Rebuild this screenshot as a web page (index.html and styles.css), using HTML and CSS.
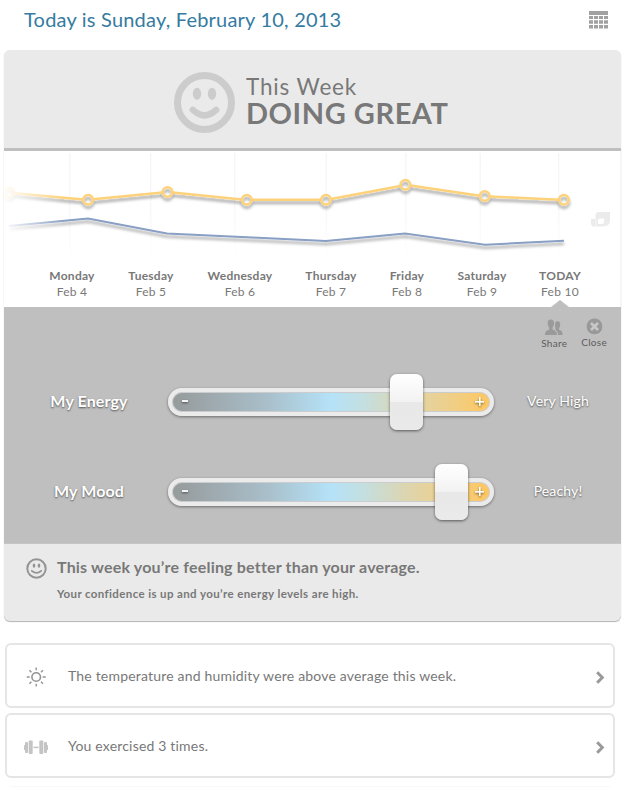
FILE: index.html
```html
<!DOCTYPE html>
<html lang="en">
<head>
<meta charset="utf-8">
<title>This Week</title>
<link rel="stylesheet" href="styles.css">
</head>
<body>
<main class="page">
  <header class="topbar">
    <h1 class="today">Today is Sunday, February 10, 2013</h1>
    <svg class="calendar" width="19" height="18" viewBox="0 0 19 18" fill="#a1a1a1"><path d="M0 0h19v4H0z"/><path d="M0 5h4v3H0zM5 5h4v3H5zM10 5h4v3h-4zM15 5h4v3h-4zM0 9.3h4v3.5H0zM5 9.3h4v3.5H5zM10 9.3h4v3.5h-4zM15 9.3h4v3.5h-4zM0 14h4v3.5H0zM5 14h4v3.5H5zM10 14h4v3.5h-4zM15 14h4v3.5h-4z"/></svg>
  </header>

  <section class="card">
    <div class="hero">
      <svg class="hero-face" width="62" height="62" viewBox="0 0 62 62"><circle cx="31.500" cy="30.500" r="27" fill="none" stroke="#cccccc" stroke-width="7"/><ellipse cx="24" cy="21.800" rx="4.200" ry="6.100" fill="#ccc"/><ellipse cx="39" cy="21.800" rx="4.200" ry="6.100" fill="#ccc"/><path d="M19.800 37.800Q31.300 48.800 43.200 37.800" fill="none" stroke="#ccc" stroke-width="6.400" stroke-linecap="round"/></svg>
      <div class="hero-text">
        <p class="hero-label">This Week</p>
        <p class="hero-value">DOING GREAT</p>
      </div>
    </div>

    <div class="chart">
      <svg class="plot" width="621" height="114" viewBox="0 151 621 114">
        <defs>
          <linearGradient id="fade" gradientUnits="userSpaceOnUse" x1="0" y1="0" x2="64" y2="0"><stop offset="0" stop-color="#000"/><stop offset=".15" stop-color="#222"/><stop offset="1" stop-color="#fff"/></linearGradient>
          <linearGradient id="grid" x1="0" y1="0" x2="0" y2="1"><stop offset="0" stop-color="#f6f6f6"/><stop offset=".6" stop-color="#f9f9f9"/><stop offset="1" stop-color="#fff"/></linearGradient>
          <mask id="left" maskUnits="userSpaceOnUse" x="0" y="151" width="621" height="114"><rect x="0" y="151" width="621" height="114" fill="url(#fade)"/></mask>
          <filter id="drop" filterUnits="userSpaceOnUse" x="0" y="151" width="621" height="114"><feDropShadow dx="0" dy="3" stdDeviation="1.5" flood-color="#000" flood-opacity=".38"/></filter>
        </defs>
        <g fill="url(#grid)"><rect x="69" y="153" width="1.5" height="108"/><rect x="150" y="153" width="1.5" height="108"/><rect x="234" y="153" width="1.5" height="108"/><rect x="325.500" y="153" width="1.5" height="108"/><rect x="405" y="153" width="1.500" height="108"/><rect x="479.500" y="153" width="1.5" height="108"/><rect x="558" y="153" width="1.5" height="108"/></g>
        <g mask="url(#left)" fill="none">
          <polyline filter="url(#drop)" points="9,226 88,218.500 167,233.500 247,237.300 326,241 405,233.500 485,244.700 564,240.800" stroke="#8a9fc4" stroke-width="2"/>
          <g filter="url(#drop)" stroke="#fdd27a" stroke-width="2.500">
            <path d="M14.500 193.300L83.200 199.400M93 199.300L162.500 192.500M172.500 192.500L242 199.500M252 199.800H321M331 199L400.500 185.900M410.500 185.500L480 195.800M490 196.400L559 199.700"/>
            <circle cx="9" cy="192.500" r="4.800"/><circle cx="88.200" cy="199.800" r="4.800"/><circle cx="167.500" cy="192" r="4.800"/><circle cx="246.800" cy="199.800" r="4.800"/><circle cx="326" cy="199.800" r="4.800"/><circle cx="405.400" cy="184.800" r="4.800"/><circle cx="484.700" cy="196" r="4.800"/><circle cx="563.900" cy="199.800" r="4.800"/>
          </g>
        </g>
        <path fill="#ebebeb" fill-rule="evenodd" d="M599 212H610V220Q610 226.500 603 226.500H594Q591 226.500 591 223V219H595.500V216Q595.500 212 599 212ZM600 218.500Q598 218.500 598 220.500V224H602Q604 224 604 222V218.500Z"/><path d="M595.900 219v7" stroke="#fff" stroke-width=".6"/>
      </svg>
      <div class="days">
        <div class="day"><b>Monday</b><span>Feb 4</span></div>
        <div class="day"><b>Tuesday</b><span>Feb 5</span></div>
        <div class="day"><b>Wednesday</b><span>Feb 6</span></div>
        <div class="day"><b>Thursday</b><span>Feb 7</span></div>
        <div class="day"><b>Friday</b><span>Feb 8</span></div>
        <div class="day"><b>Saturday</b><span>Feb 9</span></div>
        <div class="day current"><b>TODAY</b><span>Feb 10</span></div>
      </div>
    </div>

    <div class="panel">
      <div class="actions">
        <div class="action share">
          <svg width="18" height="17" viewBox="0 0 18 17" fill="#9a9a9a"><path d="M2.700 4C2.700 1.500 4 .5 5.800.5S9 1.500 9 4C9 6.200 8.300 7.500 7.500 8.500V10.500L10.500 12Q12 13 12 16H0Q0 13 1.200 12L4.200 10.500V8.500C3.400 7.500 2.700 6.200 2.700 4Z"/><path d="M10 5.500C10 3 11 2.200 12.700 2.200S15.200 3 15.200 5.500C15.200 7.500 14.600 8.400 14 9.300V10.700L16.300 11.800Q17.600 12.800 17.600 16H13.200Q13.200 12.500 10.500 11V9.300Q10 7.500 10 5.500Z"/></svg>
          <span>Share</span>
        </div>
        <div class="action close">
          <svg width="17" height="17" viewBox="0 0 17 17"><circle cx="8.500" cy="9" r="8" fill="#cecece"/><circle cx="8.500" cy="8.500" r="8" fill="#999"/><path d="M5 5l7 7M12 5l-7 7" stroke="#c8c8c8" stroke-width="2.600"/></svg>
          <span>Close</span>
        </div>
      </div>
      <div class="row">
        <span class="name name-energy">My Energy</span>
        <div class="slider energy"><i class="minus"></i><i class="plus"></i><i class="thumb"></i></div>
        <span class="value value-energy">Very High</span>
      </div>
      <div class="row">
        <span class="name name-mood">My Mood</span>
        <div class="slider mood"><i class="minus"></i><i class="plus"></i><i class="thumb"></i></div>
        <span class="value value-mood">Peachy!</span>
      </div>
    </div>

    <div class="summary">
      <svg width="21" height="21" viewBox="0 0 21 21" fill="none" stroke="#949494"><circle cx="10.500" cy="10.500" r="9.200" stroke-width="2"/><path d="M5.800 12.800Q10.500 17 15.200 12.800" stroke-width="1.800" stroke-linecap="round"/><g fill="#949494" stroke="none"><ellipse cx="8" cy="7.700" rx="1.300" ry="2.100"/><ellipse cx="13" cy="7.700" rx="1.300" ry="2.100"/></g></svg>
      <div>
        <h2 class="headline">This week you’re feeling better than your average.</h2>
        <p class="detail">Your confidence is up and you’re energy levels are high.</p>
      </div>
    </div>
  </section>

  <section class="insights">
    <div class="insight">
      <svg class="insight-icon" width="24" height="20" viewBox="0 0 24 20" fill="none" stroke="#949494" stroke-width="1.400"><circle cx="12.200" cy="10" r="4.300" stroke-width="1.600"/><path d="M12.200.5v2.800M12.200 16.700v2.800M2.700 10h3M18.700 10h3M5.400 3.300l2 2M17 14.700l2 2M19 3.300l-2 2M7.400 14.700l-2 2"/></svg>
      <p class="insight-text">The temperature and humidity were above average this week.</p>
      <svg class="chevron" width="9" height="13" viewBox="0 0 9 13" fill="none" stroke="#999" stroke-width="3"><path d="M1.200 1.200L6.300 6.500L1.200 11.800"/></svg>
    </div>
    <div class="insight">
      <svg class="insight-icon" width="24" height="20" viewBox="0 0 24 20" fill="#c4c4c4"><rect y="8" width="1.300" height="5" rx=".6"/><rect x="1" y="5" width="3" height="11" rx="1"/><rect x="4.700" y="3.500" width="4" height="13.500" rx="1"/><path d="M9.500 9.600h5v1.600h-5z"/><rect x="15.300" y="3.500" width="4" height="13.500" rx="1"/><rect x="20" y="5" width="3" height="11" rx="1"/><rect x="22.700" y="8" width="1.300" height="5" rx=".6"/></svg>
      <p class="insight-text">You exercised 3 times.</p>
      <svg class="chevron" width="9" height="13" viewBox="0 0 9 13" fill="none" stroke="#999" stroke-width="3"><path d="M1.200 1.200L6.300 6.500L1.200 11.800"/></svg>
    </div>
  </section>
  <div class="rule"></div>
</main>
</body>
</html>
```
FILE: styles.css
```css
* { box-sizing: border-box; }
body { margin: 0; background: #fff; color: #787878; font-family: Lato, sans-serif; overflow: hidden; }
h1, h2, p { margin: 0; font-weight: 400; white-space: nowrap; }
svg { display: block; flex: none; }
.page { width: 625px; height: 790px; }

.topbar { display: flex; justify-content: space-between; height: 50px; padding: 7px 17px 0 24px; }
.calendar { margin-top: 4px; }
.today { font-size: 20px; line-height: 24px; letter-spacing: .21px; color: #357ba0; }

.card { width: 617px; height: 571px; margin-left: 4px; border-radius: 6px; background: #eaeaea; box-shadow: 0 1px 1px rgba(0, 0, 0, .3); }
.hero { display: flex; height: 101px; padding: 22px 0 0 169px; border-bottom: 3px solid #bfbfbf; border-radius: 6px 6px 0 0; background: #eaeaea; }
.hero-text { margin-left: 11px; padding-top: 1px; }
.hero-label { font-size: 22.5px; line-height: 27px; letter-spacing: .85px; }
.hero-value { font-size: 29px; line-height: 25px; font-weight: 700; letter-spacing: .55px; }

.chart { height: 156px; background: #fff; border-right: 1px solid #f5f5f5; }
.plot { margin-left: -4px; }
.days { display: grid; grid-template-columns: 80px 78px 100px 82px 70px 80px 76px; padding: 3px 0 0 28px; }
.day { display: flex; flex-direction: column; align-items: center; font-size: 12px; line-height: 16px; letter-spacing: .24px; position: relative; }
.day b { font-weight: 700; }
.current::after { content: ""; position: absolute; top: 32px; border: solid transparent; border-width: 0 9px 7px; border-bottom-color: #bfbfbf; }

.panel { height: 237px; background: #bfbfbf; border-bottom: 1px solid #c6c6c6; }
.actions { display: flex; justify-content: flex-end; height: 50px; padding: 11px 14px 0 0; gap: 14px; }
.action { display: flex; flex-direction: column; align-items: center; font-size: 10px; line-height: 12px; letter-spacing: .28px; color: #5c5c5c; }
.share { padding-top: 1px; }
.share span, .close span { margin-top: 1px; }
.row { display: grid; grid-template-columns: 164px 326px 127px; align-items: center; height: 90px; color: #fff; text-shadow: 0 1px 2px rgba(0, 0, 0, .6); }
.name { padding: 0 0 3px 6px; font-size: 16px; line-height: 20px; font-weight: 700; letter-spacing: .12px; text-align: center; }
.value { padding: 0 0 2px 1px; font-size: 14px; line-height: 18px; letter-spacing: .15px; text-align: center; }
.slider { position: relative; height: 28px; border: 4px solid #ebebeb; border-radius: 14px; background: linear-gradient(90deg, #969a9b 0%, #a9bfca 30%, #b5e2f8 50%, #c3dfe1 60%, #dfd4ab 75%, #efcf87 88%, #ffc65e 100%) padding-box; box-shadow: 0 1px 3px rgba(0, 0, 0, .45), inset 0 0 0 1px #cbcccd; }
.minus, .plus { position: absolute; top: 8px; filter: drop-shadow(0 1px 1px rgba(0, 0, 0, .5)); }
.minus { left: 10px; width: 6px; height: 2px; background: #f4f4f4; }
.plus { right: 6px; top: 5px; width: 9px; height: 9px; background: linear-gradient(#fff, #fff) center / 9px 1.6px no-repeat, linear-gradient(#fff, #fff) center / 1.6px 9px no-repeat; }
.thumb { position: absolute; top: -18px; width: 33px; height: 56px; border-radius: 7px; background: linear-gradient(#fff 0%, #f2f2f2 50%, #e8e8e8 50%, #eaeaea 100%); box-shadow: 0 1px 3px rgba(0, 0, 0, .55); }
.energy .thumb { left: 218px; }
.mood .thumb { left: 263px; }

.summary { display: flex; gap: 10px; padding: 13px 0 0 22px; }
.summary svg { margin-top: 1px; }
.headline { font-size: 16px; line-height: 20px; font-weight: 700; letter-spacing: .19px; }
.detail { margin-top: 9px; font-size: 11.5px; line-height: 16px; font-weight: 700; letter-spacing: .38px; }

.insights { display: flex; flex-direction: column; gap: 5px; width: 610px; margin: 22px 0 0 5px; }
.insight { display: flex; align-items: center; height: 65px; padding: 2px 8px 0 17px; border: 2px solid #e5e5e5; border-radius: 6px; background: #fff; }
.insight-text { flex: 1; margin-left: 20px; padding-bottom: 2px; font-size: 14px; line-height: 18px; letter-spacing: .19px; }
.chevron { position: relative; top: 1px; }
.rule { width: 600px; height: 1px; margin: 8px 0 0 10px; background: #f9f9f9; }
```
